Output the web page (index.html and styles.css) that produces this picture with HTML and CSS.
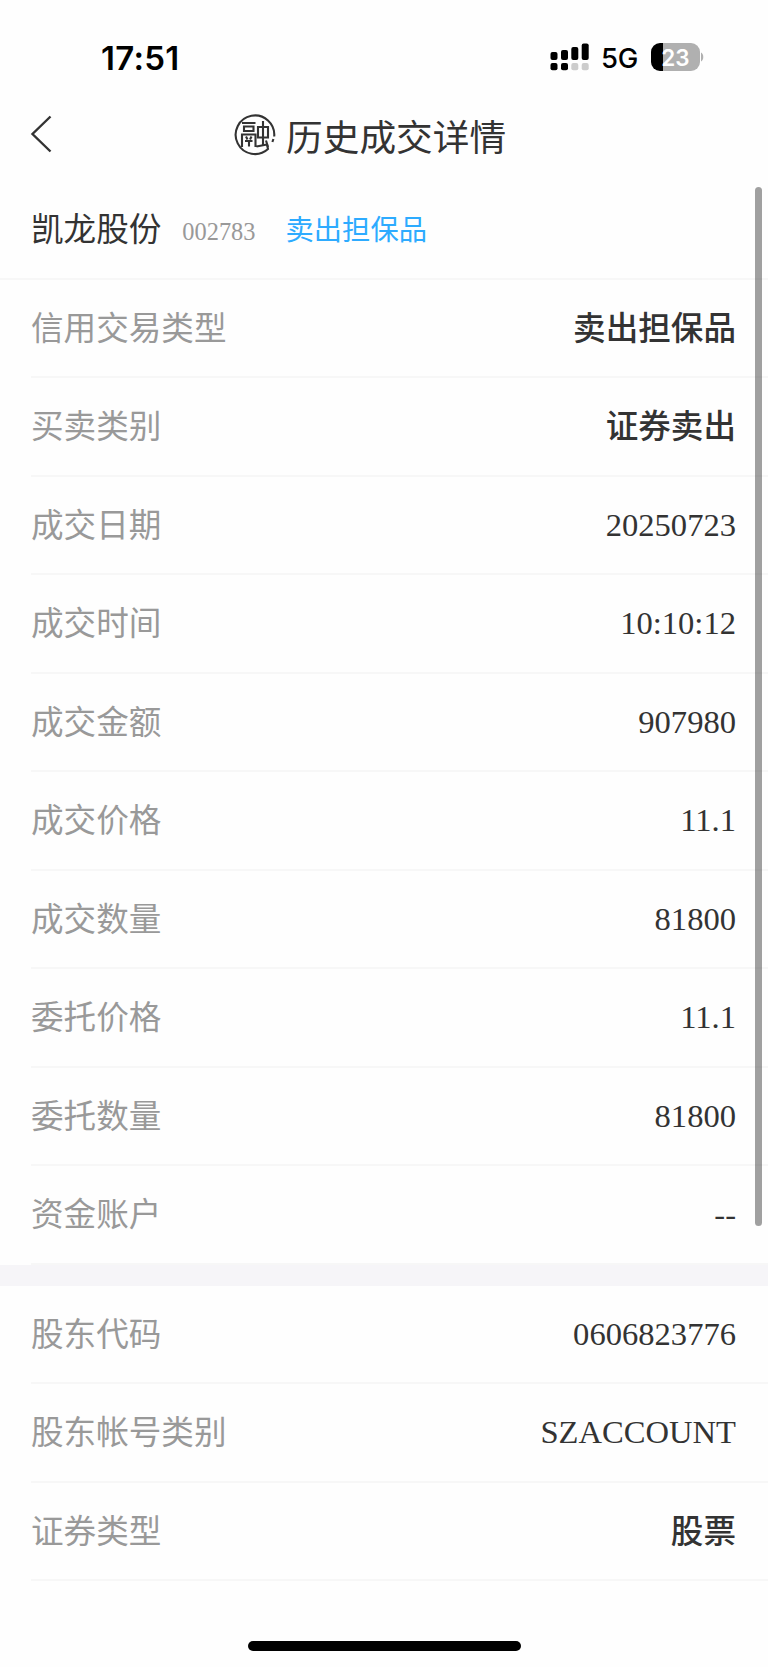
FILE: index.html
```
<!DOCTYPE html>
<html lang="zh-CN">
<head>
  <meta charset="UTF-8">
  <title>历史成交详情</title>
  <link rel="stylesheet" href="styles.css">
</head>
<body>
  <div class="status-bar">
    <span class="time">17:51</span>
    <div class="status-right">
      <svg class="signal" width="39" height="28" viewBox="0 0 39 28">
        <rect x="0.5" y="9" width="7" height="8" rx="2"/>
        <rect x="11" y="7" width="7" height="10" rx="2"/>
        <rect x="21.3" y="4" width="7" height="13" rx="2"/>
        <rect x="31.7" y="0.5" width="7" height="16.5" rx="2"/>
        <rect x="0.5" y="20" width="7" height="7.3" rx="2"/>
        <rect x="11" y="20" width="7" height="7.3" rx="2"/>
        <rect x="21.3" y="20" width="7" height="7.3" rx="2" fill="#ccc"/>
        <rect x="31.7" y="20" width="7" height="7.3" rx="2" fill="#ccc"/>
      </svg>
      <span class="network">5G</span>
      <div class="battery"><span>23</span></div>
      <svg class="battery-cap" width="4" height="10" viewBox="0 0 4 10"><path d="M1 0.5C4 2 4 8 1 9.5Z" fill="#b0b0b0"/></svg>
    </div>
  </div>

  <div class="nav">
    <svg class="back" width="24" height="40" viewBox="0 0 24 40"><path d="M20.5 2.5L2.5 20L20.5 37.5"/></svg>
    <div class="title">
      <svg class="badge" width="42" height="42" viewBox="0 0 42 42">
        <path d="M33 30.5L34 35A19.3 19.3 0 1 1 40.2 22.5M39.4 25L38.4 28"/>
        <path d="M8 9H21.500M10 12.500H19.500V17H10ZM8 33V20.500H21.500V33M12 22.500L13.500 25.500M17.500 22.500L16 25.500M11 27H18.500M15 27V32.500M24 13H34V23.500H24ZM29 7V31.500M22.500 32.500L33 30.500M32 26.500L34 33"/>
      </svg>
      <h1>历史成交详情</h1>
    </div>
  </div>

  <div class="stock">
    <span class="name">凯龙股份</span>
    <span class="code">002783</span>
    <span class="action">卖出担保品</span>
  </div>

  <div class="list">
    <div class="row"><label>信用交易类型</label><b>卖出担保品</b></div>
    <div class="row"><label>买卖类别</label><b>证券卖出</b></div>
    <div class="row"><label>成交日期</label><span>20250723</span></div>
    <div class="row"><label>成交时间</label><span>10:10:12</span></div>
    <div class="row"><label>成交金额</label><span>907980</span></div>
    <div class="row"><label>成交价格</label><span>11.1</span></div>
    <div class="row"><label>成交数量</label><span>81800</span></div>
    <div class="row"><label>委托价格</label><span>11.1</span></div>
    <div class="row"><label>委托数量</label><span>81800</span></div>
    <div class="row"><label>资金账户</label><span>--</span></div>
  </div>
  <div class="gap"></div>
  <div class="list">
    <div class="row"><label>股东代码</label><span>0606823776</span></div>
    <div class="row"><label>股东帐号类别</label><span>SZACCOUNT</span></div>
    <div class="row"><label>证券类型</label><b>股票</b></div>
  </div>

  <div class="home-bar"></div>
  <div class="scrollbar"></div>
</body>
</html>
```
FILE: styles.css
```
* {
  box-sizing: border-box;
}
body {
  position: relative;
  display: flex;
  flex-direction: column;
  margin: 0;
  height: 1667px;
  overflow: hidden;
  background: #fefefe;
  color: #333;
  font-family: "Liberation Serif", "Noto Sans CJK SC", serif;
  font-size: 32.6px;
}
.status-bar {
  display: flex;
  justify-content: space-between;
  align-items: center;
  height: 114px;
  padding: 0 64px 0 101px;
  color: #000;
  font-family: Inter, sans-serif;
}
.time {
  margin-top: 1px;
  font-size: 33px;
  font-weight: 600;
  letter-spacing: 0.3px;
}
.status-right {
  display: flex;
  align-items: center;
}
.network {
  margin: 2px 0 0 12px;
  font-size: 27.5px;
  font-weight: 500;
  letter-spacing: -0.3px;
}
.battery {
  display: flex;
  justify-content: center;
  align-items: center;
  width: 49px;
  height: 28px;
  margin-left: 13px;
  border-radius: 9px;
  background: linear-gradient(to right, #000 11.5px, #b0b0b0 11.5px);
  color: #fff;
  font-size: 22.5px;
  font-weight: 600;
}
.nav {
  display: flex;
  align-items: center;
  height: 68px;
  padding: 0 30px;
}
.back {
  margin-top: -28px;
  fill: none;
  stroke: #333;
  stroke-width: 2.4;
}
.title {
  display: flex;
  align-items: center;
  margin: -26px 0 0 180px;
}
.badge {
  margin-top: -1px;
  fill: none;
  stroke: #333;
  stroke-width: 2.1;
}
h1 {
  margin: 0 0 0 10px;
  font-family: "Noto Sans CJK SC", sans-serif;
  font-size: 36.7px;
  font-weight: 400;
  line-height: 50px;
}
.stock {
  display: flex;
  align-items: center;
  height: 97.500px;
  padding: 0 31px;
  border-bottom: 2px solid #f7f7f7;
}
.name {
  line-height: 40px;
}
.code {
  margin: 5px 0 0 21px;
  color: #999;
  font-size: 24.4px;
}
.action {
  margin: 3px 0 0 30px;
  color: #2dabff;
  font-size: 28.3px;
  line-height: 40px;
}
.row {
  display: flex;
  justify-content: space-between;
  align-items: center;
  height: 98.5px;
  margin-left: 31px;
  padding-right: 32px;
  border-bottom: 2px solid #f7f7f7;
  line-height: 44px;
}
.row label,
.row b {
  margin-top: 2px;
}
.row label {
  color: #999;
}
.row b {
  font-weight: 500;
}
.gap {
  height: 21px;
  background: #f6f5f8;
}
.home-bar {
  width: 273px;
  height: 10px;
  margin: 60px 0 0 248px;
  border-radius: 5px;
  background: #000;
}
.scrollbar {
  position: absolute;
  top: 187px;
  right: 6px;
  width: 7px;
  height: 1039px;
  border-radius: 4px;
  background: rgba(0, 0, 0, 0.37);
}
```
